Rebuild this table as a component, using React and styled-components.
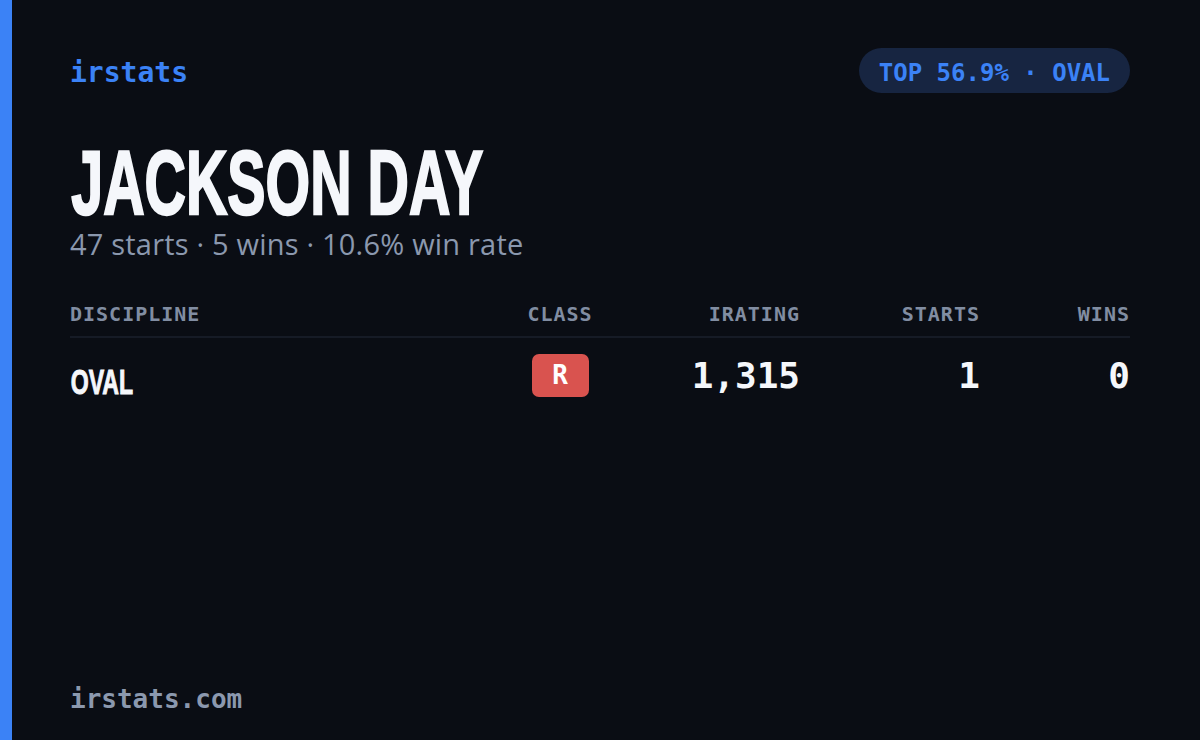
import React from 'react';
import styled, { createGlobalStyle } from 'styled-components';

const GlobalStyle = createGlobalStyle`
  html, body {
    margin: 0;
    padding: 0;
    background: #0a0d14;
  }
`;

const mono = `"DejaVu Sans Mono", "Liberation Mono", monospace`;
const narrow = `"Liberation Sans", Arial, sans-serif`;

const Card = styled.div`
  box-sizing: border-box;
  width: 1200px;
  height: 740px;
  background: #0a0d14;
  border-left: 12px solid #3b82f6;
  padding: 48px 70px 26px 58px;
  display: flex;
  flex-direction: column;
`;

const Header = styled.div`
  display: flex;
  align-items: center;
  justify-content: space-between;
  height: 45px;
`;

const Brand = styled.div`
  font-family: ${mono};
  font-size: 28px;
  font-weight: 600;
  color: #3b82f6;
  margin-top: 4px;
`;

const Pill = styled.div`
  height: 45px;
  padding: 0 20px;
  border-radius: 23px;
  background: #172541;
  color: #3b82f6;
  font-family: ${mono};
  font-size: 24px;
  font-weight: 600;
  display: flex;
  align-items: center;
  padding-top: 4px;
  box-sizing: border-box;
`;

const Name = styled.h1`
  margin: 51px 0 0;
  font-family: ${narrow};
  font-weight: 700;
  font-size: 91px;
  line-height: 78px;
  color: #f5f7fb;
  -webkit-text-stroke: 2.4px #f5f7fb;
  letter-spacing: 0;
  transform: scaleX(0.63);
  transform-origin: left center;
  white-space: nowrap;
  padding-left: 2px;
`;

const Summary = styled.div`
  margin-top: 6px;
  font-family: "Open Sans", "Noto Sans", sans-serif;
  font-size: 29px;
  line-height: 32px;
  font-weight: 500;
  letter-spacing: 0.2px;
  color: #8b98ae;
`;

const Row = styled.div`
  display: grid;
  grid-template-columns: 1fr 120px 180px 180px 150px;
  align-items: center;
`;

const HeadRow = styled(Row)`
  margin-top: 42px;
  padding-bottom: 10px;
  border-bottom: 2px solid #161b26;
`;

const HeadCell = styled.div`
  font-family: ${mono};
  font-size: 20px;
  font-weight: 700;
  letter-spacing: 1px;
  color: #818da2;
  text-align: ${p => p.$align || 'right'};
`;

const BodyRow = styled(Row)`
  padding-top: 10px;
`;

const Discipline = styled.div`
  font-family: ${narrow};
  font-weight: 700;
  font-size: 35px;
  line-height: 40px;
  color: #f5f7fb;
  -webkit-text-stroke: 1px #f5f7fb;
  margin-top: 14px;
  padding-left: 1px;
  transform: scaleX(0.66);
  transform-origin: left center;
`;

const BadgeCell = styled.div`
  display: flex;
  justify-content: center;
`;

const Badge = styled.div`
  width: 57px;
  height: 43px;
  border-radius: 7px;
  background: #d9534f;
  color: #fff;
  font-family: ${mono};
  font-weight: 700;
  font-size: 26px;
  display: flex;
  align-items: center;
  justify-content: center;
`;

const Num = styled.div`
  font-family: ${mono};
  font-size: 36px;
  font-weight: 600;
  color: #f5f7fb;
  text-align: right;
`;

const Footer = styled.div`
  margin-top: auto;
  font-family: ${mono};
  font-size: 26px;
  font-weight: 600;
  color: #8b98ae;
`;

export default function App() {
  return (
    <>
      <GlobalStyle />
      <Card>
        <Header>
          <Brand>irstats</Brand>
          <Pill>TOP 56.9% · OVAL</Pill>
        </Header>
        <Name>JACKSON DAY</Name>
        <Summary>47 starts · 5 wins · 10.6% win rate</Summary>
        <HeadRow>
          <HeadCell $align="left">DISCIPLINE</HeadCell>
          <HeadCell $align="center">CLASS</HeadCell>
          <HeadCell>IRATING</HeadCell>
          <HeadCell>STARTS</HeadCell>
          <HeadCell>WINS</HeadCell>
        </HeadRow>
        <BodyRow>
          <Discipline>OVAL</Discipline>
          <BadgeCell>
            <Badge>R</Badge>
          </BadgeCell>
          <Num>1,315</Num>
          <Num>1</Num>
          <Num>0</Num>
        </BodyRow>
        <Footer>irstats.com</Footer>
      </Card>
    </>
  );
}
